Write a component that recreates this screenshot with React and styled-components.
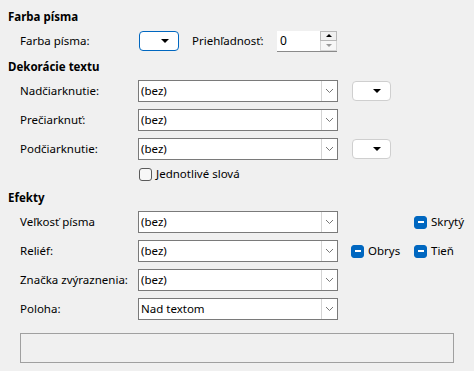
import React from "react";
import styled, { createGlobalStyle } from "styled-components";

const Global = createGlobalStyle`
  html, body { margin: 0; padding: 0; background: #f0f0f0; }
  body { font-family: "Noto Sans", "Open Sans", sans-serif; font-size: 11.5px; color: #000; }
`;

const Page = styled.div`
  width: 474px;
  height: 371px;
  box-sizing: border-box;
  padding: 9px 0 0 8px;
  display: flex;
  flex-direction: column;
`;

const Header = styled.div`
  font-weight: 700;
  line-height: 16px;
  height: 16px;
  margin-top: ${(p) => p.$mt || 0}px;
`;

const Row = styled.div`
  display: flex;
  align-items: center;
  height: ${(p) => p.$h || 22}px;
  margin-top: ${(p) => p.$mt || 0}px;
  padding-left: 12px;
`;

const Label = styled.div`
  width: ${(p) => p.$w || 118}px;
  margin-left: ${(p) => p.$ml || 0}px;
  flex: none;
  white-space: nowrap;
  line-height: 16px;
`;

const ComboBox = styled.div`
  width: 200px;
  height: 22px;
  box-sizing: border-box;
  border: 1px solid #7a7a7a;
  background: #fff;
  display: flex;
  align-items: stretch;
  flex: none;
`;

const ComboText = styled.div`
  flex: 1;
  padding-left: 2px;
  line-height: 20px;
  white-space: nowrap;
`;

const ComboButton = styled.div`
  width: 16px;
  box-sizing: border-box;
  border-left: 1px solid #d4d4d4;
  display: flex;
  align-items: center;
  justify-content: center;
`;

const ColorButton = styled.div`
  width: ${(p) => p.$w || 39}px;
  height: 20px;
  box-sizing: border-box;
  border: 1px solid ${(p) => (p.$focus ? "#0067c0" : "#cfcfcf")};
  border-radius: 4px;
  background: #fff;
  margin-left: ${(p) => p.$ml || 0}px;
  display: flex;
  align-items: center;
  justify-content: flex-end;
  padding-right: 9px;
  flex: none;
`;

const Triangle = styled.div`
  width: 0;
  height: 0;
  border-left: 4px solid transparent;
  border-right: 4px solid transparent;
  border-top: 4px solid #000;
`;

const SpinBox = styled.div`
  width: 60px;
  height: 21px;
  box-sizing: border-box;
  display: flex;
  border-bottom: 1px solid #8a8a8a;
  flex: none;
`;

const SpinText = styled.div`
  flex: 1;
  background: #fff;
  padding-left: 3px;
  line-height: 20px;
  font-size: 12px;
`;

const SpinButtons = styled.div`
  width: 17px;
  display: flex;
  flex-direction: column;
  background: #fff;
`;

const SpinBtn = styled.div`
  flex: 1;
  box-sizing: border-box;
  border: 1px solid #b8b8b8;
  border-top-width: ${(p) => (p.$down ? 0 : 1)}px;
  border-color: ${(p) => (p.$down ? "#d6d6d6" : "#b8b8b8")};
  background: ${(p) => (p.$down ? "#f7f7f7" : "#f0f0f0")};
  display: flex;
  align-items: center;
  justify-content: center;
`;

const SmallTri = styled.div`
  width: 0;
  height: 0;
  border-left: 3px solid transparent;
  border-right: 3px solid transparent;
  ${(p) =>
    p.$down
      ? `border-top: 3px solid #9a9a9a;`
      : `border-bottom: 3px solid #000;`}
`;

const Check = styled.label`
  display: flex;
  align-items: center;
  gap: 4px;
  margin-left: ${(p) => p.$ml || 0}px;
  width: ${(p) => (p.$w ? `${p.$w}px` : "auto")};
  line-height: 16px;
  white-space: nowrap;
  flex: none;
`;

const Box = styled.span`
  width: 13px;
  height: 13px;
  box-sizing: border-box;
  border-radius: 3px;
  flex: none;
  display: flex;
  align-items: center;
  justify-content: center;
  ${(p) =>
    p.$mixed
      ? `background: #0067c0; border: 1px solid #0067c0;`
      : `background: #f7f7f7; border: 1px solid #5a5a5a;`}
`;

const Dash = styled.span`
  width: 6px;
  height: 1.5px;
  background: #fff;
`;

const Preview = styled.div`
  margin: 13px 0 0 12px;
  width: 434px;
  height: 30px;
  box-sizing: border-box;
  border: 1px solid #a0a0a0;
`;

const Chevron = () => (
  <svg width="9" height="6" viewBox="0 0 9 6">
    <path d="M1 1 L4.5 4.5 L8 1" fill="none" stroke="#777" strokeWidth="1" />
  </svg>
);

const Combo = ({ value }) => (
  <ComboBox>
    <ComboText>{value}</ComboText>
    <ComboButton>
      <Chevron />
    </ComboButton>
  </ComboBox>
);

const CheckItem = ({ label, mixed, ml, w }) => (
  <Check $ml={ml} $w={w}>
    <Box $mixed={mixed}>{mixed && <Dash />}</Box>
    {label}
  </Check>
);

export default function App() {
  return (
    <>
      <Global />
      <Page>
        <Header>Farba písma</Header>
        <Row $h={20} $mt={6}>
          <Label $w={119}>Farba písma:</Label>
          <ColorButton $w={40} $focus>
            <Triangle />
          </ColorButton>
          <Label $w={85} $ml={13}>Priehľadnosť:</Label>
          <SpinBox>
            <SpinText>0</SpinText>
            <SpinButtons>
              <SpinBtn>
                <SmallTri />
              </SpinBtn>
              <SpinBtn $down>
                <SmallTri $down />
              </SpinBtn>
            </SpinButtons>
          </SpinBox>
        </Row>
        <Header $mt={8}>Dekorácie textu</Header>
        <Row $mt={5}>
          <Label>Nadčiarknutie:</Label>
          <Combo value="(bez)" />
          <ColorButton $ml={14}>
            <Triangle />
          </ColorButton>
        </Row>
        <Row $mt={7}>
          <Label>Prečiarknuť:</Label>
          <Combo value="(bez)" />
        </Row>
        <Row $mt={7}>
          <Label>Podčiarknutie:</Label>
          <Combo value="(bez)" />
          <ColorButton $ml={14}>
            <Triangle />
          </ColorButton>
        </Row>
        <Row $h={14} $mt={7}>
          <Label />
          <CheckItem label="Jednotlivé slová" ml={1} />
        </Row>
        <Header $mt={9}>Efekty</Header>
        <Row $mt={5}>
          <Label>Veľkosť písma</Label>
          <Combo value="(bez)" />
          <CheckItem label="Skrytý" mixed ml={76} />
        </Row>
        <Row $mt={7}>
          <Label>Reliéf:</Label>
          <Combo value="(bez)" />
          <CheckItem label="Obrys" mixed ml={13} w={63} />
          <CheckItem label="Tieň" mixed />
        </Row>
        <Row $mt={7}>
          <Label>Značka zvýraznenia:</Label>
          <Combo value="(bez)" />
        </Row>
        <Row $mt={7}>
          <Label>Poloha:</Label>
          <Combo value="Nad textom" />
        </Row>
        <Preview />
      </Page>
    </>
  );
}
